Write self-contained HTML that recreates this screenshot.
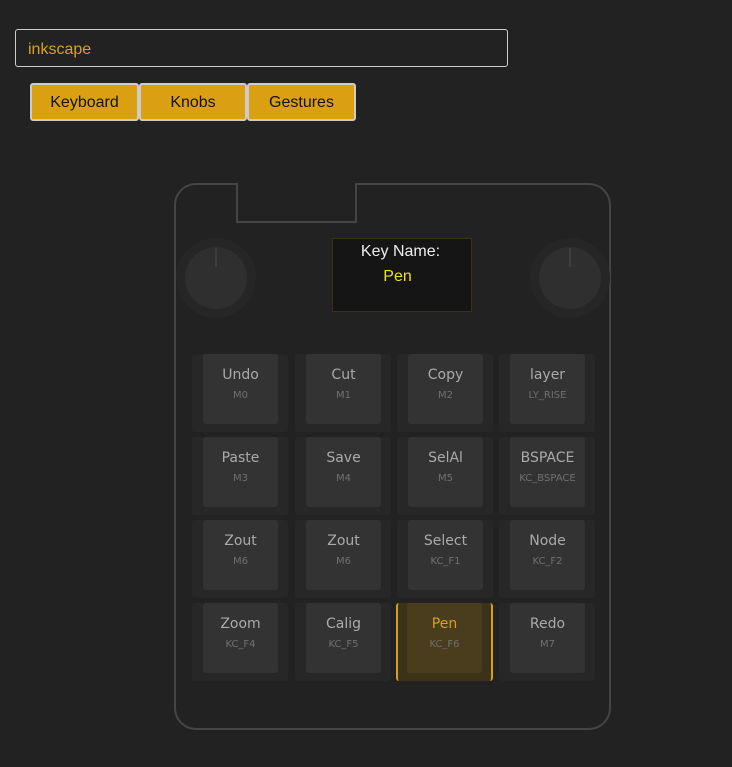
<!DOCTYPE html>
<html><head><style>
*{box-sizing:border-box;margin:0;padding:0}
body{width:732px;height:767px;background:#222;position:relative;overflow:hidden;font-family:"Liberation Sans",sans-serif}
.inp{position:absolute;left:15px;top:29px;width:493px;height:38px;border:1px solid #ccc;border-radius:3px;color:#d9a020;font-size:16px;padding:11px 12px}
.btn{position:absolute;top:83px;height:38px;background:#dba012;border:2px solid #ccc;border-radius:3px;font-size:16px;color:#111;text-align:center;line-height:36px}
.dev{position:absolute;left:174px;top:183px;width:437px;height:547px;border:2px solid #454545;border-radius:22px}
.notch{position:absolute;left:236px;top:183px;width:121px;height:40px;background:#222;border:2px solid #454545;border-top:none}
.knob{position:absolute;top:238px;width:80px;height:80px;border-radius:50%;background:#262626}
.knob i{position:absolute;left:9px;top:9px;width:62px;height:62px;border-radius:50%;background:#2f2f2f}
.knob b{position:absolute;left:39px;top:10px;width:2px;height:19px;background:#3e3e3e}
.scr{position:absolute;left:332px;top:238px;width:140px;height:74px;background:#151515;border:1px solid #3a3212;text-align:center;font-size:16px}
.key{position:absolute;width:96px;height:78px;background:#272727;border-radius:3px}
.cap{position:absolute;left:11px;top:0;width:75px;height:70px;background:#333;border-radius:3px;text-align:center;font-family:"DejaVu Sans",sans-serif;color:#aaa;font-size:14px;padding-top:13px}
.cap small{display:block;font-size:10px;color:#707070;margin-top:7px}
.sel{background:#3b3218;border-left:2px solid #d4a017;border-right:2px solid #d4a017}
.sel .cap{background:#4a3d1e;color:#d9a020;left:9px}
</style></head><body>
<div class="inp">inkscape</div>
<div class="btn" style="left:30px;width:109px">Keyboard</div>
<div class="btn" style="left:139px;width:108px">Knobs</div>
<div class="btn" style="left:247px;width:109px">Gestures</div>
<div class="dev"></div>
<div class="notch"></div>
<div class="knob" style="left:176px"><i></i><b></b></div>
<div class="knob" style="left:530px"><i></i><b></b></div>
<div class="scr"><div style="color:#eee;margin-top:4px;margin-right:3px">Key Name:</div><div style="color:#f0e020;margin-top:7px;margin-right:9px">Pen</div></div>

<div class="key" style="left:192px;top:354px"><div class="cap">Undo<small>M0</small></div></div>
<div class="key" style="left:295px;top:354px"><div class="cap">Cut<small>M1</small></div></div>
<div class="key" style="left:397px;top:354px"><div class="cap">Copy<small>M2</small></div></div>
<div class="key" style="left:499px;top:354px"><div class="cap">layer<small>LY_RISE</small></div></div>

<div class="key" style="left:192px;top:437px"><div class="cap">Paste<small>M3</small></div></div>
<div class="key" style="left:295px;top:437px"><div class="cap">Save<small>M4</small></div></div>
<div class="key" style="left:397px;top:437px"><div class="cap">SelAl<small>M5</small></div></div>
<div class="key" style="left:499px;top:437px"><div class="cap">BSPACE<small>KC_BSPACE</small></div></div>

<div class="key" style="left:192px;top:520px"><div class="cap">Zout<small>M6</small></div></div>
<div class="key" style="left:295px;top:520px"><div class="cap">Zout<small>M6</small></div></div>
<div class="key" style="left:397px;top:520px"><div class="cap">Select<small>KC_F1</small></div></div>
<div class="key" style="left:499px;top:520px"><div class="cap">Node<small>KC_F2</small></div></div>

<div class="key" style="left:192px;top:603px"><div class="cap">Zoom<small>KC_F4</small></div></div>
<div class="key" style="left:295px;top:603px"><div class="cap">Calig<small>KC_F5</small></div></div>
<div class="key sel" style="left:396px;top:603px;width:97px"><div class="cap">Pen<small>KC_F6</small></div></div>
<div class="key" style="left:499px;top:603px"><div class="cap">Redo<small>M7</small></div></div>
</body></html>
